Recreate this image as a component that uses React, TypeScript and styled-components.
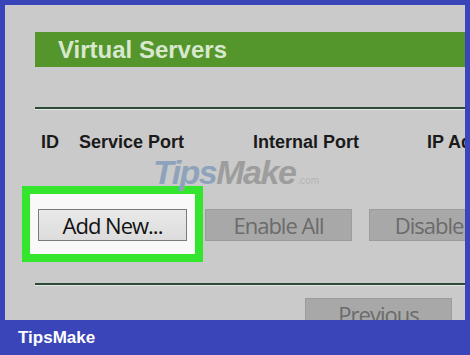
import React from "react";
import styled, { createGlobalStyle } from "styled-components";

const Global = createGlobalStyle`
  html, body { margin: 0; padding: 0; background: #3a45b9; }
  body { overflow: hidden; }
`;

const Frame = styled.div`
  width: 470px;
  height: 355px;
  background: #3a45b9;
  overflow: hidden;
  padding-top: 5px;
  box-sizing: border-box;
`;

const Panel = styled.div`
  position: relative;
  width: 460px;
  height: 315px;
  margin-left: 5px;
  box-sizing: border-box;
  background: #cacaca;
  overflow: hidden;
  padding-left: 30px;
  display: flex;
  flex-direction: column;
  align-items: flex-start;
  font-family: "Liberation Sans", Arial, sans-serif;
`;

const TitleBar = styled.div`
  margin-top: 27px;
  height: 35px;
  width: 520px;
  background: #54952c;
  display: flex;
  align-items: center;
  padding-left: 23px;
  box-sizing: border-box;
  color: #d7e8cf;
  font-weight: 700;
  font-size: 24px;
  flex-shrink: 0;
`;

const Rule = styled.div<{ $top: number }>`
  margin-top: ${(p) => p.$top}px;
  width: 520px;
  height: 2px;
  background: #2c4a37;
  border-bottom: 1px solid #dfeadf;
  flex-shrink: 0;
`;

const HeadRow = styled.div`
  margin-top: 22px;
  display: grid;
  grid-template-columns: 38px 174px 174px 120px;
  padding-left: 6px;
  font-size: 18px;
  line-height: 21px;
  font-weight: 700;
  color: #1a1a1a;
  white-space: nowrap;
  flex-shrink: 0;
`;

const ButtonRow = styled.div`
  margin-top: 56px;
  display: flex;
  padding-left: 3px;
  gap: 17px;
  flex-shrink: 0;
`;

const HighlightWrap = styled.div`
  position: relative;
  margin-right: 1px;
`;

const Highlight = styled.span`
  position: absolute;
  top: -23px;
  bottom: -21px;
  left: -16px;
  right: -16px;
  border: 8px solid #33e52d;
  background: #f9f9f9;
  z-index: 0;
`;

const Button = styled.button<{ $active?: boolean }>`
  position: relative;
  z-index: 1;
  width: ${(p) => (p.$active ? 149 : 147)}px;
  height: 32px;
  flex-shrink: 0;
  margin: 0;
  padding: 0;
  box-sizing: border-box;
  display: flex;
  align-items: center;
  justify-content: center;
  font-family: "Open Sans", "Liberation Sans", sans-serif;
  font-size: 22px;
  letter-spacing: -1px;
  white-space: nowrap;
  border: 1px solid ${(p) => (p.$active ? "#7b7b7b" : "#9c9c9c")};
  background: ${(p) =>
    p.$active ? "linear-gradient(#e9e9e9, #dcdcdc)" : "#a8a8a8"};
  color: ${(p) => (p.$active ? "#121212" : "#6b6b6b")};
`;

const PagerRow = styled.div`
  margin-top: 12px;
  width: 417px;
  display: flex;
  justify-content: flex-end;
  flex-shrink: 0;
`;

const Watermark = styled.div`
  position: absolute;
  left: 148px;
  top: 150px;
  display: flex;
  align-items: baseline;
  font-family: "Liberation Sans", Arial, sans-serif;
  font-style: italic;
  font-weight: 700;
  font-size: 34px;
  line-height: 1;
  pointer-events: none;
`;

const MarkPart = styled.span<{ $color: string; $small?: boolean }>`
  color: ${(p) => p.$color};
  font-size: ${(p) => (p.$small ? 10 : 34)}px;
  letter-spacing: ${(p) => (p.$small ? 0 : -1.5)}px;
  ${(p) => (p.$small ? "font-style: normal; font-weight: 400; margin-left: 2px;" : "")}
`;

const Footer = styled.div`
  height: 35px;
  display: flex;
  align-items: center;
  padding-left: 18px;
  color: #ffffff;
  font-family: "Liberation Sans", Arial, sans-serif;
  font-weight: 700;
  font-size: 17px;
`;

export default function App() {
  return (
    <>
      <Global />
      <Frame>
        <Panel>
          <TitleBar>Virtual Servers</TitleBar>
          <Rule $top={40} />
          <HeadRow>
            <span>ID</span>
            <span>Service Port</span>
            <span>Internal Port</span>
            <span>IP Address</span>
          </HeadRow>
          <ButtonRow>
            <HighlightWrap>
              <Highlight />
              <Button $active>Add New...</Button>
            </HighlightWrap>
            <Button>Enable All</Button>
            <Button>Disable All</Button>
          </ButtonRow>
          <Rule $top={42} />
          <PagerRow>
            <Button>Previous</Button>
          </PagerRow>
          <Watermark>
            <MarkPart $color="#8ea3bb">Tips</MarkPart>
            <MarkPart $color="#9d9d9d">Make</MarkPart>
            <MarkPart $color="#b4b4b4" $small>.com</MarkPart>
          </Watermark>
        </Panel>
        <Footer>TipsMake</Footer>
      </Frame>
    </>
  );
}
